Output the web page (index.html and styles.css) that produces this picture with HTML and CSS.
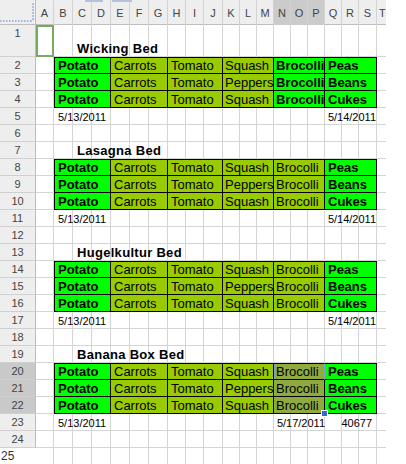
FILE: index.html
```html
<!DOCTYPE html>
<html lang="en">
<head>
    <meta charset="UTF-8">
    <meta name="viewport" content="width=device-width, initial-scale=1.0">
    <title>Garden Beds</title>
    <link rel="stylesheet" href="styles.css">
</head>
<body>
    <div class="sheet">
        <div class="cols">
            <span class="corner">
                <svg width="36" height="25" viewBox="0 0 36 25">
                    <path d="M0 21 H31 Q33 21 33 19 V3" fill="none" stroke="#9fb2e0" stroke-width="2" stroke-dasharray="1.5 1.5"/>
                </svg>
            </span>
            <span>A</span><span>B</span><span>C</span><span>D</span><span>E</span><span>F</span><span>G</span>
            <span>H</span><span>I</span><span>J</span><span>K</span><span>L</span><span>M</span>
            <span class="on">N</span><span class="on">O</span><span class="on">P</span>
            <span>Q</span><span>R</span><span>S</span><span class="last">T</span>
            <i class="tab tab-one"></i>
            <i class="tab tab-two"></i>
        </div>

        <!-- Wicking Bed -->
        <div class="row tall">
            <div class="rh">1</div>
            <div class="a1"></div>
            <div class="title">Wicking Bed</div>
        </div>
        <div class="row top">
            <div class="rh">2</div>
            <div class="cell b first green">Potato</div>
            <div class="cell e olive">Carrots</div>
            <div class="cell h olive">Tomato</div>
            <div class="cell k olive">Squash</div>
            <div class="cell n green">Brocolli</div>
            <div class="cell q green">Peas</div>
        </div>
        <div class="row">
            <div class="rh">3</div>
            <div class="cell b first green">Potato</div>
            <div class="cell e olive">Carrots</div>
            <div class="cell h olive">Tomato</div>
            <div class="cell k olive">Peppers</div>
            <div class="cell n green">Brocolli</div>
            <div class="cell q green">Beans</div>
        </div>
        <div class="row">
            <div class="rh">4</div>
            <div class="cell b first green">Potato</div>
            <div class="cell e olive">Carrots</div>
            <div class="cell h olive">Tomato</div>
            <div class="cell k olive">Squash</div>
            <div class="cell n green">Brocolli</div>
            <div class="cell q green">Cukes</div>
        </div>
        <div class="row">
            <div class="rh">5</div>
            <div class="date b">5/13/2011</div>
            <div class="date q right">5/14/2011</div>
        </div>
        <div class="row"><div class="rh">6</div></div>

        <!-- Lasagna Bed -->
        <div class="row">
            <div class="rh">7</div>
            <div class="title">Lasagna Bed</div>
        </div>
        <div class="row top">
            <div class="rh">8</div>
            <div class="cell b first green">Potato</div>
            <div class="cell e olive">Carrots</div>
            <div class="cell h olive">Tomato</div>
            <div class="cell k olive">Squash</div>
            <div class="cell n olive">Brocolli</div>
            <div class="cell q green">Peas</div>
        </div>
        <div class="row">
            <div class="rh">9</div>
            <div class="cell b first green">Potato</div>
            <div class="cell e olive">Carrots</div>
            <div class="cell h olive">Tomato</div>
            <div class="cell k olive">Peppers</div>
            <div class="cell n olive">Brocolli</div>
            <div class="cell q green">Beans</div>
        </div>
        <div class="row">
            <div class="rh">10</div>
            <div class="cell b first green">Potato</div>
            <div class="cell e olive">Carrots</div>
            <div class="cell h olive">Tomato</div>
            <div class="cell k olive">Squash</div>
            <div class="cell n olive">Brocolli</div>
            <div class="cell q green">Cukes</div>
        </div>
        <div class="row">
            <div class="rh">11</div>
            <div class="date b">5/13/2011</div>
            <div class="date q right">5/14/2011</div>
        </div>
        <div class="row"><div class="rh">12</div></div>

        <!-- Hugelkultur Bed -->
        <div class="row">
            <div class="rh">13</div>
            <div class="title">Hugelkultur Bed</div>
        </div>
        <div class="row top">
            <div class="rh">14</div>
            <div class="cell b first green">Potato</div>
            <div class="cell e olive">Carrots</div>
            <div class="cell h olive">Tomato</div>
            <div class="cell k olive">Squash</div>
            <div class="cell n olive">Brocolli</div>
            <div class="cell q green">Peas</div>
        </div>
        <div class="row">
            <div class="rh">15</div>
            <div class="cell b first green">Potato</div>
            <div class="cell e olive">Carrots</div>
            <div class="cell h olive">Tomato</div>
            <div class="cell k olive">Peppers</div>
            <div class="cell n olive">Brocolli</div>
            <div class="cell q green">Beans</div>
        </div>
        <div class="row">
            <div class="rh">16</div>
            <div class="cell b first green">Potato</div>
            <div class="cell e olive">Carrots</div>
            <div class="cell h olive">Tomato</div>
            <div class="cell k olive">Squash</div>
            <div class="cell n olive">Brocolli</div>
            <div class="cell q green">Cukes</div>
        </div>
        <div class="row">
            <div class="rh">17</div>
            <div class="date b">5/13/2011</div>
            <div class="date q right">5/14/2011</div>
        </div>
        <div class="row"><div class="rh">18</div></div>

        <!-- Banana Box Bed -->
        <div class="row">
            <div class="rh">19</div>
            <div class="title">Banana Box Bed</div>
        </div>
        <div class="row top">
            <div class="rh on">20</div>
            <div class="cell b first green">Potato</div>
            <div class="cell e olive">Carrots</div>
            <div class="cell h olive">Tomato</div>
            <div class="cell k olive">Squash</div>
            <div class="cell n sel active">Brocolli</div>
            <div class="cell q green">Peas</div>
        </div>
        <div class="row">
            <div class="rh on">21</div>
            <div class="cell b first green">Potato</div>
            <div class="cell e olive">Carrots</div>
            <div class="cell h olive">Tomato</div>
            <div class="cell k olive">Peppers</div>
            <div class="cell n sel">Brocolli</div>
            <div class="cell q green">Beans</div>
        </div>
        <div class="row">
            <div class="rh on">22</div>
            <div class="cell b first green">Potato</div>
            <div class="cell e olive">Carrots</div>
            <div class="cell h olive">Tomato</div>
            <div class="cell k olive">Squash</div>
            <div class="cell n sel handle">Brocolli<i class="fill"></i></div>
            <div class="cell q green">Cukes</div>
        </div>
        <div class="row">
            <div class="rh">23</div>
            <div class="date b">5/13/2011</div>
            <div class="date n right flush">5/17/2011</div>
            <div class="date q right num">40677</div>
        </div>
        <div class="row"><div class="rh">24</div></div>
        <div class="row cut"><div class="rh">25</div></div>
    </div>
</body>
</html>
```
FILE: styles.css
```css
:root {
    --cols: 36px 18px 19px 19px 19px 19px 19px 19px 18px 18px 19px 17px 17px 17px 17px 17px 17px 17px 17px 18px 17px;
    --grid: #d5d5d5;
    --vlines: linear-gradient(to right,
        transparent 53px, var(--grid) 0 54px,
        transparent 0 72px, var(--grid) 0 73px,
        transparent 0 91px, var(--grid) 0 92px,
        transparent 0 110px, var(--grid) 0 111px,
        transparent 0 129px, var(--grid) 0 130px,
        transparent 0 148px, var(--grid) 0 149px,
        transparent 0 167px, var(--grid) 0 168px,
        transparent 0 185px, var(--grid) 0 186px,
        transparent 0 203px, var(--grid) 0 204px,
        transparent 0 222px, var(--grid) 0 223px,
        transparent 0 239px, var(--grid) 0 240px,
        transparent 0 256px, var(--grid) 0 257px,
        transparent 0 273px, var(--grid) 0 274px,
        transparent 0 290px, var(--grid) 0 291px,
        transparent 0 307px, var(--grid) 0 308px,
        transparent 0 324px, var(--grid) 0 325px,
        transparent 0 341px, var(--grid) 0 342px,
        transparent 0 358px, var(--grid) 0 359px,
        transparent 0 376px, var(--grid) 0 377px,
        transparent 0);
}
* {
    box-sizing: border-box;
}
body {
    margin: 0;
    background: #fff;
    font-family: "Liberation Sans", Arial, sans-serif;
    color: #000;
}
.sheet {
    width: 386px;
    height: 464px;
    overflow: hidden;
}

/* column header */
.cols {
    position: relative;
    display: grid;
    grid-template-columns: var(--cols);
    height: 25px;
    background: #eee;
    border-bottom: 1px solid #bdbdbd;
}
.cols span {
    border-right: 1px solid #d2d2d2;
    padding-top: 7px;
    font-size: 11px;
    line-height: 13px;
    color: #444;
    text-align: center;
}
.cols .last {
    text-align: left;
    padding-left: 2px;
}
.cols .corner {
    padding: 0;
    border-right: 1px solid #bdbdbd;
}
.cols .corner svg {
    display: block;
}
.cols .on {
    background: #cbcbcb;
}
.tab {
    position: absolute;
    top: 0;
    height: 2px;
    background: #b7c2d9;
}
.tab-one {
    left: 85px;
    width: 18px;
}
.tab-two {
    left: 112px;
    width: 20px;
}

/* rows */
.row {
    display: grid;
    grid-template-columns: var(--cols);
    height: 17px;
    background: linear-gradient(to top, var(--grid) 1px, transparent 0), var(--vlines);
}
.row.tall {
    height: 32px;
}
.rh {
    grid-column: 1;
    background: #eee;
    border-right: 1px solid #bdbdbd;
    border-bottom: 1px solid #d0d0d0;
    font-size: 11px;
    line-height: 16px;
    color: #444;
    text-align: center;
}
.rh.on {
    background: #c9c9c9;
}
.row.cut {
    background: var(--vlines);
    --grid: #e4e4e4;
}
.row.cut .rh {
    background: #fff;
    border: 0;
    padding-left: 1px;
    font-size: 12px;
    text-align: left;
    color: #333;
}

.a1 {
    grid-column: 2;
    box-shadow: inset 0 0 0 2px #79aa5f;
}
.title {
    grid-column: 4 / span 8;
    display: flex;
    align-items: center;
    padding: 0 4px;
    font-size: 13px;
    font-weight: bold;
    letter-spacing: 0.3px;
    white-space: nowrap;
}
.tall .title {
    align-items: flex-end;
    line-height: 16px;
}

/* bed cells */
.b { grid-column: 3 / span 3; }
.e { grid-column: 6 / span 3; }
.h { grid-column: 9 / span 3; }
.k { grid-column: 12 / span 3; }
.n { grid-column: 15 / span 3; }
.q { grid-column: 18 / span 3; }

.cell {
    display: flex;
    align-items: center;
    padding: 0 3px;
    font-size: 13px;
    white-space: nowrap;
    overflow: hidden;
    border-right: 1px solid #000;
    border-bottom: 1px solid #000;
}
.cell.k,
.cell.n {
    padding: 0 0 0 2px;
}
.top .cell {
    border-top: 1px solid #000;
}
.cell.first {
    border-left: 1px solid #000;
}
.green {
    background: #00ff00;
    font-weight: bold;
}
.olive {
    background: #99cc00;
}
.sel {
    background: #8fab3f;
}
.active {
    border-top-color: #8d9dcc;
    border-right-color: #8d9dcc;
    box-shadow: inset 1px 0 0 #8d9dcc;
}
.handle {
    position: relative;
    overflow: visible;
}
.fill {
    position: absolute;
    right: -4px;
    bottom: -4px;
    width: 7px;
    height: 7px;
    background: #3b67c9;
    border: 1px solid #fff;
}

/* dates under each bed */
.date {
    display: flex;
    align-items: center;
    padding: 0 4px;
    font-size: 11px;
    white-space: nowrap;
}
.date.right {
    justify-content: flex-end;
    padding: 0 1px 0 0;
}
.date.flush {
    padding: 0;
}
.date.num {
    padding-right: 5px;
}
```
